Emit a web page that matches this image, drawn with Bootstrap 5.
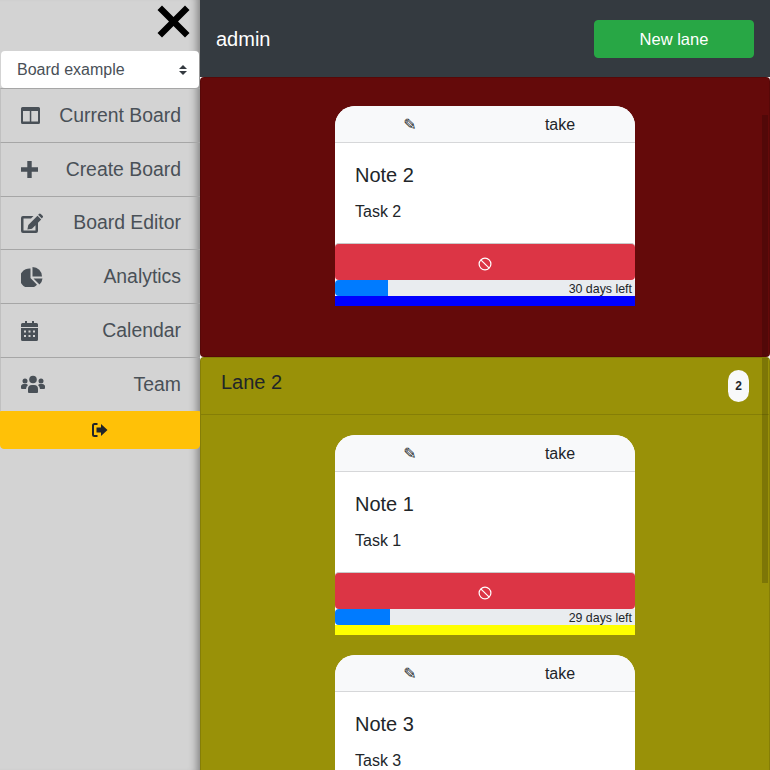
<!DOCTYPE html>
<html lang="en">
<head>
  <meta charset="UTF-8">
  <meta name="viewport" content="width=device-width, initial-scale=1.0">
  <title>Kanban | Board example</title>
  <link href="https://cdn.jsdelivr.net/npm/bootstrap@5.3.2/dist/css/bootstrap.min.css" rel="stylesheet">
  <style>
    html, body {
      height: 100%;
      overflow: hidden;
    }

    body {
      font-family: "Liberation Sans", Arial, sans-serif;
      color: #212529;
    }

    .side-panel {
      width: 200px;
      flex: none;
      background-color: #d3d3d3;
      box-shadow: inset -10px 0 10px -8px rgba(0, 0, 0, 0.45);
    }

    .close-row {
      height: 51px;
      padding: 5px 10px 0 0;
    }

    .board-select {
      height: 37px;
      margin: 0 1px;
      width: 198px;
      padding: 0 32px 0 16px;
      font-size: 16px;
      color: #495057;
      border: 0;
      border-radius: 4px;
      background-position: right 12px center;
      background-size: 8px 10px;
      background-image: url("data:image/svg+xml,%3csvg xmlns='http://www.w3.org/2000/svg' viewBox='0 0 4 5'%3e%3cpath fill='%23343a40' d='M2 0L0 2h4zm0 5L0 3h4z'/%3e%3c/svg%3e");
    }

    .side-item {
      height: 53.8px;
      padding: 0 19px 0 20px;
      font-size: 19.4px;
      color: #495057;
      border-top: 1px solid #a6a6a6;
      border-left: 1px solid #c0c0c0;
      text-decoration: none;
    }

    .side-item svg {
      fill: #495057;
    }

    .logout-btn {
      height: 38px;
      width: 200px;
      background-color: #ffc107;
      border: 1px solid #ffc107;
      border-radius: 0 0 4px 4px;
      padding: 0;
    }

    .top-bar {
      height: 77px;
      flex: none;
      background-color: #343a40;
      padding: 0 16px;
    }

    .top-bar .user-name {
      font-size: 20px;
      color: #fff;
    }

    .new-lane {
      width: 160px;
      height: 38px;
      background-color: #28a745;
      border-color: #28a745;
      border-radius: 4px;
      margin-top: 1px;
      padding: 0;
      font-size: 16.5px;
    }

    .lane-box {
      position: relative;
      flex: none;
      border: 1px solid rgba(0, 0, 0, 0.125);
      border-radius: 4px;
    }

    .lane-red {
      background-color: #640a0a;
      height: 280px;
      padding-top: 28px;
    }

    .lane-olive {
      background-color: #999108;
      height: 600px;
    }

    .lane-head {
      height: 57px;
      padding: 0 20px;
      font-size: 20px;
      border-bottom: 1px solid rgba(0, 0, 0, 0.125);
    }

    .lane-count {
      width: 21px;
      height: 32px;
      border-radius: 11px;
      background-color: #f8f9fa;
      font-size: 12px;
      font-weight: 700;
      margin-bottom: 1px;
    }

    .lane-notes {
      padding-top: 20px;
      gap: 20px;
    }

    .note-card {
      width: 300px;
      background-color: #fff;
      border-radius: 20px 20px 0 0;
      overflow: hidden;
      flex: none;
    }

    .note-head {
      height: 37px;
      padding-top: 1px;
      background-color: #f8f9fa;
      border-bottom: 1px solid #d6d7d9;
    }

    .note-head > div {
      width: 150px;
      text-align: center;
    }

    .pencil {
      font-family: "DejaVu Sans", sans-serif;
      font-size: 16px;
    }

    .note-body {
      height: 100px;
      padding: 20px;
    }

    .note-body h5 {
      font-size: 20px;
      line-height: 24px;
      margin: 0 0 13px;
    }

    .note-body p {
      font-size: 16px;
      line-height: 24px;
      margin: 0;
    }

    .ban-btn {
      height: 37px;
      background-color: #dc3545;
      border: 0;
      border-top: 1px solid #c9c9c9;
      border-radius: 4px;
      padding: 3px 0 0;
    }

    .days-track {
      height: 16px;
      background-color: #e9ecef;
      border-radius: 4px 0 0 4px;
      overflow: hidden;
      position: relative;
    }

    .days-fill {
      background-color: #007bff;
    }

    .days-text {
      position: absolute;
      right: 3px;
      top: 0;
      font-size: 12.4px;
      line-height: 18px;
    }

    .strip-blue {
      height: 10px;
      background-color: #00f;
    }

    .strip-yellow {
      height: 10px;
      background-color: #ff0;
    }

    .lane-scroll {
      position: absolute;
      right: 1px;
      width: 6px;
      background-color: rgba(0, 0, 0, 0.18);
    }
  </style>
</head>
<body class="d-flex">
  <div class="side-panel d-flex flex-column">
    <div class="close-row d-flex justify-content-end">
      <svg width="33" height="33" viewBox="0 0 33 33"><path d="M5 0.500L16.500 12 28 0.500 32.500 5 21 16.500 32.500 28 28 32.500 16.500 21 5 32.500 0.500 28 12 16.500 0.500 5z" fill="#000"/></svg>
    </div>
    <select class="form-select board-select">
      <option>Board example</option>
    </select>
    <a href="#" class="side-item d-flex align-items-center justify-content-between">
      <svg width="20" height="17" viewBox="0 0 20 17"><path fill-rule="evenodd" d="M1.500 0h16A1.500 1.500 0 0 1 19 1.500v14a1.500 1.500 0 0 1-1.500 1.500h-16A1.500 1.500 0 0 1 0 15.500v-14A1.500 1.500 0 0 1 1.500 0zM2 4v10.500h6.800V4zm8.300 0v10.500H17V4z"/></svg>
      <span>Current Board</span>
    </a>
    <a href="#" class="side-item d-flex align-items-center justify-content-between">
      <svg width="18" height="17" viewBox="0 0 18 17"><path d="M6.300 0h4.400v6.300H17v4.400h-6.300V17H6.300v-6.300H0V6.300h6.300z"/></svg>
      <span>Create Board</span>
    </a>
    <a href="#" class="side-item d-flex align-items-center justify-content-between">
      <svg width="22" height="20" viewBox="0 0 22 20"><path d="M2 3h10.500l-2.500 2.500H2.500v12h12V11l2.500-2.500V18a2 2 0 0 1-2 2H2a2 2 0 0 1-2-2V5a2 2 0 0 1 2-2zM16.500 2.800l3.700 3.700L11 15.700l-4.600.9.900-4.600zM18 1a1.300 1.300 0 0 1 1.800 0l1.800 1.800a1.300 1.300 0 0 1 0 1.800l-.8.800-3.700-3.700z"/></svg>
      <span>Board Editor</span>
    </a>
    <a href="#" class="side-item d-flex align-items-center justify-content-between">
      <svg width="22" height="20" viewBox="0 0 22 20"><path d="M9.500 1.500v9.500l6.500 6.700A9.800 9.800 0 1 1 9.500 1.500zM11.500 0a9.500 9.500 0 0 1 9.500 9.500h-9.500zM12.500 11.500h9a9.500 9.500 0 0 1-3 6z"/></svg>
      <span>Analytics</span>
    </a>
    <a href="#" class="side-item d-flex align-items-center justify-content-between">
      <svg width="17" height="20" viewBox="0 0 17 20"><path fill-rule="evenodd" d="M4 0h2v2h5V0h2v2h2.500A1.500 1.500 0 0 1 17 3.500V6H0V3.500A1.500 1.500 0 0 1 1.500 2H4zM0 7h17v11.500a1.500 1.500 0 0 1-1.500 1.500h-14A1.500 1.500 0 0 1 0 18.500zm3 2.500v2h2v-2zm4.500 0v2h2v-2zm4.500 0v2h2v-2zM3 14v2h2v-2zm4.500 0v2h2v-2zm4.500 0v2h2v-2z"/></svg>
      <span>Calendar</span>
    </a>
    <a href="#" class="side-item d-flex align-items-center justify-content-between">
      <svg width="24" height="18" viewBox="0 0 24 18"><circle cx="12" cy="4.500" r="3.800"/><circle cx="4" cy="6" r="2.500"/><circle cx="20" cy="6" r="2.500"/><path d="M7 17v-3a4 4 0 0 1 4-4h2a4 4 0 0 1 4 4v3a1 1 0 0 1-1 1H8a1 1 0 0 1-1-1zM0 13a3 3 0 0 1 3-4h2.500L7 10a6 6 0 0 0-2 4H1a1 1 0 0 1-1-1zM24 13a3 3 0 0 0-3-4h-2.500L17 10a6 6 0 0 1 2 4h4a1 1 0 0 0 1-1z"/></svg>
      <span>Team</span>
    </a>
    <button type="button" class="btn logout-btn d-flex align-items-center justify-content-center">
      <svg width="16" height="14" viewBox="0 0 16 14"><path d="M5.500 0v2H2.500a.5.500 0 0 0-.5.500v9a.5.500 0 0 0 .5.500h3v2h-3A2.500 2.500 0 0 1 0 11.500v-9A2.500 2.500 0 0 1 2.500 0zM9 1l6.500 6L9 13V9.500H4.500v-5H9z" fill="#212529"/></svg>
    </button>
  </div>

  <div class="flex-grow-1 d-flex flex-column bg-white overflow-hidden">
    <div class="top-bar d-flex justify-content-between align-items-center">
      <span class="user-name">admin</span>
      <button type="button" class="btn text-white new-lane">New lane</button>
    </div>

    <div class="lane-box lane-red">
      <div class="lane-scroll" style="top: 37px; bottom: 0"></div>
      <div class="d-flex justify-content-center">
        <div class="note-card">
          <div class="note-head d-flex align-items-center">
            <div class="pencil">✎</div>
            <div>take</div>
          </div>
          <div class="note-body">
            <h5>Note 2</h5>
            <p>Task 2</p>
          </div>
          <button type="button" class="btn ban-btn w-100 d-flex align-items-center justify-content-center">
            <svg width="14" height="14" viewBox="0 0 14 14" fill="none" stroke="#fff" stroke-width="1.200"><circle cx="7" cy="7" r="5.900"/><path d="M2.800 2.800l8.400 8.400"/></svg>
          </button>
          <div class="days-track d-flex">
            <div class="days-fill" style="width: 53px"></div>
            <span class="days-text">30 days left</span>
          </div>
          <div class="strip-blue"></div>
        </div>
      </div>
    </div>

    <div class="lane-box lane-olive">
      <div class="lane-scroll" style="top: 0; height: 225px"></div>
      <div class="lane-head d-flex justify-content-between align-items-center">
        <span class="pb-2">Lane 2</span>
        <span class="lane-count d-flex align-items-center justify-content-center">2</span>
      </div>
      <div class="lane-notes d-flex flex-column align-items-center">
        <div class="note-card">
          <div class="note-head d-flex align-items-center">
            <div class="pencil">✎</div>
            <div>take</div>
          </div>
          <div class="note-body">
            <h5>Note 1</h5>
            <p>Task 1</p>
          </div>
          <button type="button" class="btn ban-btn w-100 d-flex align-items-center justify-content-center">
            <svg width="14" height="14" viewBox="0 0 14 14" fill="none" stroke="#fff" stroke-width="1.200"><circle cx="7" cy="7" r="5.900"/><path d="M2.800 2.800l8.400 8.400"/></svg>
          </button>
          <div class="days-track d-flex">
            <div class="days-fill" style="width: 55px"></div>
            <span class="days-text">29 days left</span>
          </div>
          <div class="strip-yellow"></div>
        </div>
        <div class="note-card">
          <div class="note-head d-flex align-items-center">
            <div class="pencil">✎</div>
            <div>take</div>
          </div>
          <div class="note-body">
            <h5>Note 3</h5>
            <p>Task 3</p>
          </div>
        </div>
      </div>
    </div>
  </div>

  <script src="https://cdn.jsdelivr.net/npm/bootstrap@5.3.2/dist/js/bootstrap.bundle.min.js"></script>
</body>
</html>
